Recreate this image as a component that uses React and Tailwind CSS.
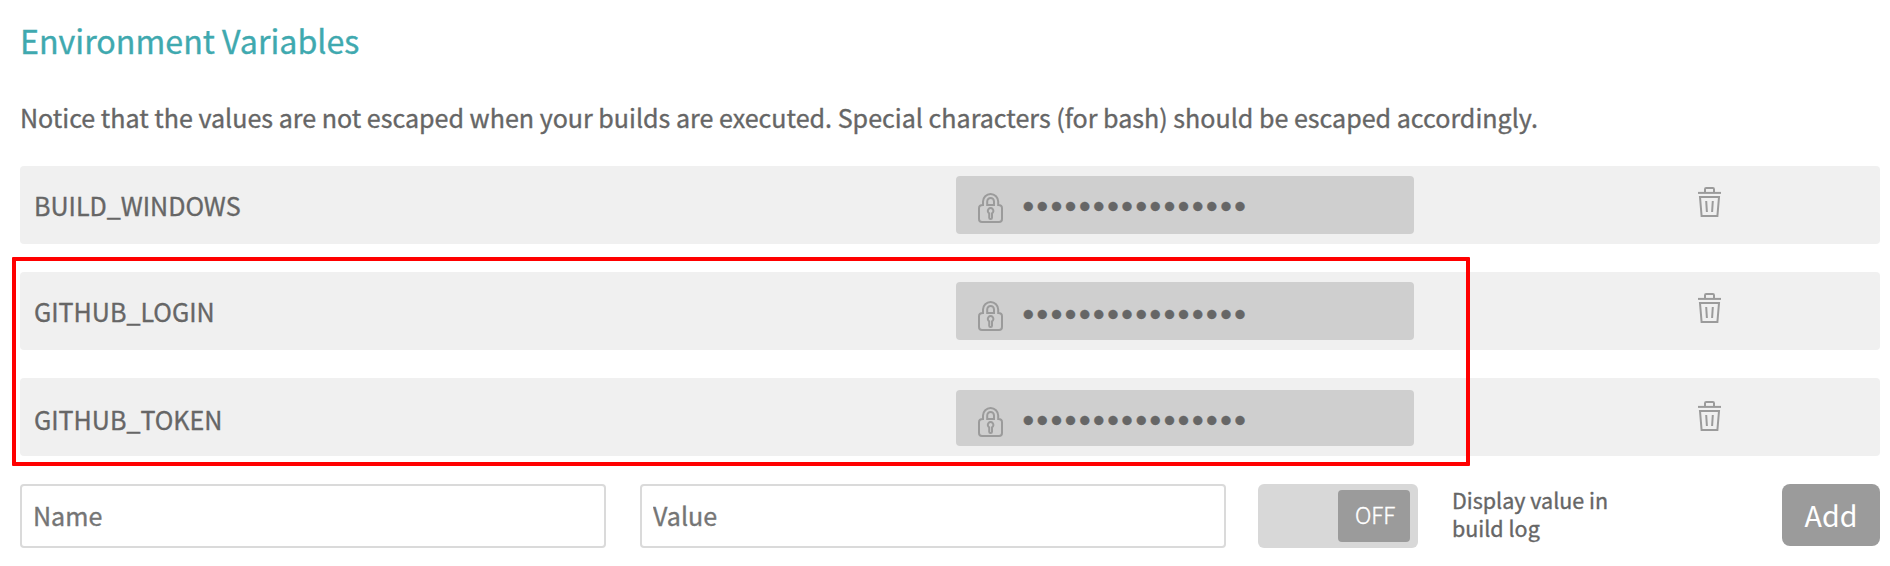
const FONT = 'font-["Noto_Sans_CJK_SC","Open_Sans",sans-serif]';

function LockIcon({ className }) {
  return (
    <svg className={className} width="26" height="31" viewBox="0 0 26 31" fill="none" stroke="#9b9b9b" strokeWidth="2">
      <path d="M5 12V8.600a7.600 7.600 0 0 1 15.200 0V12c2.800 0 3.800 1 3.800 3.200v10.800c0 2-1 3-3 3H4c-2 0-3-1-3-3V15.200C1 13 2.200 12 5 12Z" />
      <path d="M9.200 12V8.400a3.400 3.400 0 0 1 6.800 0V12Z" />
      <path d="M11.200 20.300a2.800 2.800 0 1 1 2.800 0v4.400a1.400 1.400 0 0 1-2.800 0Z" />
    </svg>
  );
}

function TrashIcon() {
  return (
    <svg width="24" height="30" viewBox="0 0 24 30" fill="none" stroke="#9b9b9b" strokeWidth="2">
      <path d="M0 5.900H23" />
      <path d="M7 5.500V2.200Q7 1 8.200 1H14.800Q16 1 16 2.200V5.500" />
      <path d="M2 10H21L19.400 29H3.600Z" />
      <path d="M8.200 14L8.900 25M14.800 14L14.100 25" />
    </svg>
  );
}

const variables = [
  { name: "BUILD_WINDOWS", label: "", box: "mt-[10px] h-[58px]", lock: "mt-[17px]", dots: "mt-[11px]", trash: "mt-[21px]" },
  { name: "GITHUB_LOGIN", label: "", box: "mt-[10px] h-[58px]", lock: "mt-[19px]", dots: "mt-[13px]", trash: "mt-[21px]" },
  { name: "GITHUB_TOKEN", label: "mt-[2px]", box: "mt-[12px] h-[56px]", lock: "mt-[17px]", dots: "mt-[11px]", trash: "mt-[23px]" },
];

function VariableRow({ item }) {
  return (
    <li className="flex h-[78px] items-start rounded bg-[#f0f0f0] pl-[14px]">
      <span className={`w-[922px] text-[25.07px] leading-[78px] ${item.label}`}>{item.name}</span>
      <div className={`flex w-[458px] items-start rounded bg-[#cfcfcf] pl-[22px] ${item.box}`}>
        <LockIcon className={item.lock} />
        <span className={`ml-[18.5px] font-["Liberation_Sans",sans-serif] text-[33px] leading-[40px] tracking-[2.57px] ${item.dots}`}>
          ••••••••••••••••
        </span>
      </div>
      <button type="button" aria-label="Delete" className={`ml-[284px] ${item.trash}`}>
        <TrashIcon />
      </button>
    </li>
  );
}

export default function App() {
  return (
    <main
      className={`relative h-[566px] w-[1890px] overflow-hidden bg-white px-[20px] pt-[20px] pr-[10px] text-[#666666] [-webkit-text-stroke:0.35px_currentColor] ${FONT}`}
    >
      <h1 className="text-[32.2px] leading-[40px] text-[#3fa9af]">Environment Variables</h1>
      <p className="mt-[39px] text-[25.07px] leading-[36px] whitespace-nowrap">
        Notice that the values are not escaped when your builds are executed. Special characters (for bash) should be escaped accordingly.
      </p>
      <ul className="mt-[31px] flex flex-col gap-7">
        {variables.map((item) => (
          <VariableRow key={item.name} item={item} />
        ))}
      </ul>
      <form className="mt-7 flex items-start">
        <input
          placeholder="Name"
          className="h-16 w-[586px] rounded border-2 border-[#dadada] pb-[2px] pl-[11px] text-[25.07px] placeholder:text-[#757575]"
        />
        <input
          placeholder="Value"
          className="ml-[34px] h-16 w-[586px] rounded border-2 border-[#dadada] pb-[2px] pl-[11px] text-[25.07px] placeholder:text-[#757575]"
        />
        <div className="ml-8 flex h-16 w-40 items-center justify-end rounded-md bg-[#d8d8d8] pr-2">
          <span className="h-[52px] w-[72px] rounded bg-[#9b9b9b] pl-[17px] text-[22.5px] leading-[49px] font-light text-white">OFF</span>
        </div>
        <p className="mt-[2px] ml-[34px] w-[180px] text-[21.5px] leading-[28px]">
          Display value in
          <br />
          build log
        </p>
        <button type="button" className="ml-[150px] h-[62px] w-[98px] rounded-lg bg-[#9b9b9b] text-[28.6px] leading-[60px] text-white [-webkit-text-stroke:0]">
          Add
        </button>
      </form>
      <div className="pointer-events-none absolute top-[257px] left-[12px] h-[209px] w-[1458px] rounded-[1px] border-4 border-[#ff0000]" />
    </main>
  );
}
